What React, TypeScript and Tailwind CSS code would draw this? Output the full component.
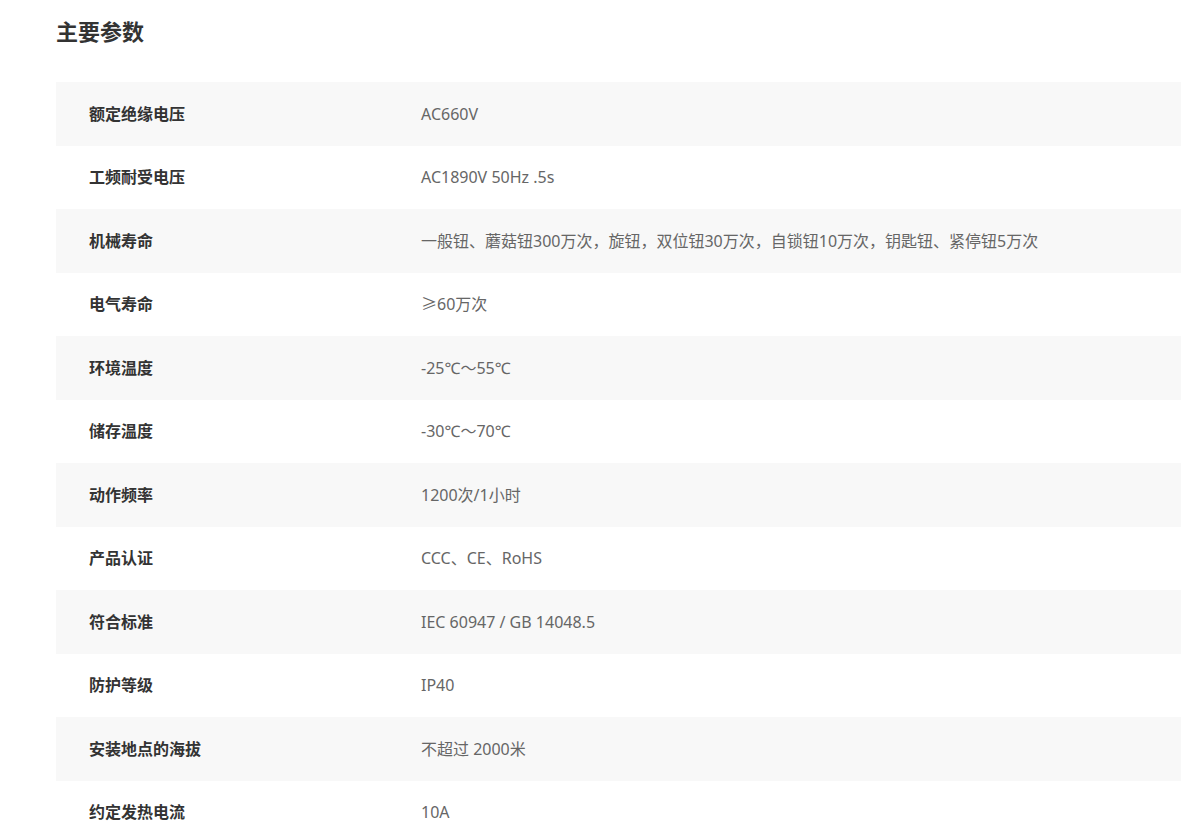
import React from 'react';

type SpecRow = {
    label: string;
    value: string;
};

const specRows: SpecRow[] = [
    { label: '额定绝缘电压', value: 'AC660V' },
    { label: '工频耐受电压', value: 'AC1890V 50Hz .5s' },
    { label: '机械寿命', value: '一般钮、蘑菇钮300万次，旋钮，双位钮30万次，自锁钮10万次，钥匙钮、紧停钮5万次' },
    { label: '电气寿命', value: '≥60万次' },
    { label: '环境温度', value: '-25℃～55℃' },
    { label: '储存温度', value: '-30℃～70℃' },
    { label: '动作频率', value: '1200次/1小时' },
    { label: '产品认证', value: 'CCC、CE、RoHS' },
    { label: '符合标准', value: 'IEC 60947 / GB 14048.5' },
    { label: '防护等级', value: 'IP40' },
    { label: '安装地点的海拔', value: '不超过 2000米' },
    { label: '约定发热电流', value: '10A' },
];

const App: React.FC = () => {
    return (
        <div
            className="min-h-screen bg-white pl-[56px]"
            style={{ fontFamily: '"Noto Sans", "Noto Sans CJK SC", sans-serif' }}
        >
            <h2 className="pt-[16px] text-[22px] font-bold leading-[30px] text-[#333333]">主要参数</h2>

            <div className="mt-[36px] w-[1125px]">
                {specRows.map((row, index) => (
                    <div
                        key={row.label}
                        className={
                            index % 2 === 0
                                ? 'grid h-[63.5px] grid-cols-[365px_1fr] items-center bg-[#f8f8f8]'
                                : 'grid h-[63.5px] grid-cols-[365px_1fr] items-center bg-white'
                        }
                    >
                        <div className="pl-[33px] text-[16px] font-bold text-[#333333]">{row.label}</div>
                        <div className="text-[16px] text-[#666666]">{row.value}</div>
                    </div>
                ))}
            </div>
        </div>
    );
};

export default App;
